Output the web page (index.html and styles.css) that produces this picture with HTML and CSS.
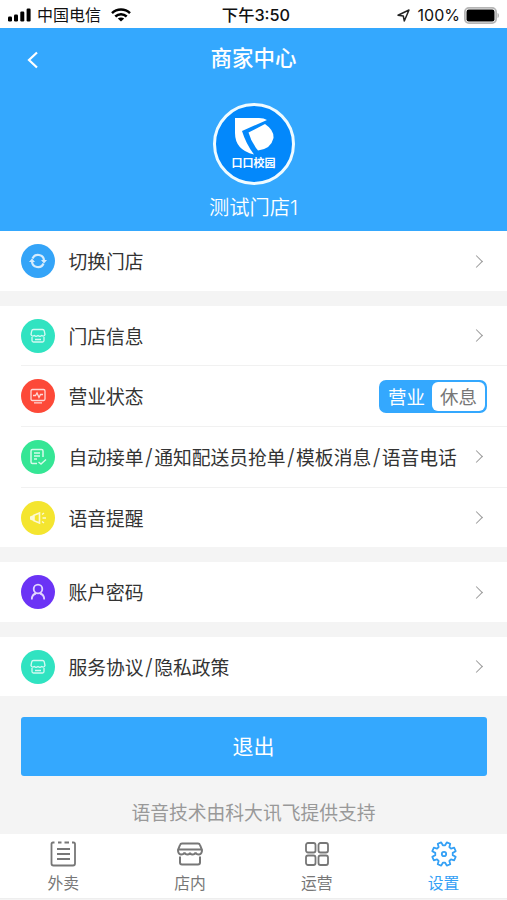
FILE: index.html
```html
<!DOCTYPE html>
<html lang="zh-CN">
<head>
    <meta charset="utf-8">
    <title>商家中心</title>
    <link rel="stylesheet" href="styles.css">
</head>
<body>
    <div class="status">
        <div class="status-left">
            <svg class="signal" width="24" height="14" viewBox="0 0 24 14">
                <rect x="0" y="8.5" width="4" height="5" rx="1.2"/>
                <rect x="6" y="6.5" width="4" height="7" rx="1.2"/>
                <rect x="12.3" y="3.5" width="4" height="10" rx="1.2"/>
                <rect x="18.6" y="0.5" width="4" height="13" rx="1.2"/>
            </svg>
            <span class="carrier">中国电信</span>
            <svg class="wifi" width="20" height="14" viewBox="0 0 20 14">
                <path d="M1 5.2C6 .4 14 .4 19 5.2M4.3 8.5C7.6 5.4 12.4 5.4 15.7 8.5" fill="none" stroke="#000" stroke-width="2.5"/>
                <path d="M10 13.6L6.8 10.6C8.6 9 11.4 9 13.2 10.6Z"/>
            </svg>
        </div>
        <div class="time">下午3:50</div>
        <div class="status-right">
            <svg width="13" height="13" viewBox="0 0 13 13">
                <path d="M1 6.2L12 1L7.3 12L6.3 7Z" fill="none" stroke="#222" stroke-width="1.5" stroke-linejoin="round"/>
            </svg>
            <span class="percent">100%</span>
            <svg width="36" height="17" viewBox="0 0 36 17">
                <rect x=".9" y=".9" width="31.2" height="15.2" rx="4" fill="#fff" stroke="#b5b5b5" stroke-width="1.8"/>
                <rect x="2.5" y="2.5" width="28" height="12" rx="2.2"/>
                <path d="M33.5 6C35.5 6.5 35.5 10.5 33.5 11Z" fill="#b5b5b5"/>
            </svg>
        </div>
    </div>

    <div class="header">
        <div class="nav">
            <svg class="back" width="12" height="18" viewBox="0 0 12 18">
                <path d="M10 1.5L2 9L10 16.5" fill="none" stroke="#fff" stroke-width="2.2"/>
            </svg>
            <h1 class="title">商家中心</h1>
        </div>
        <div class="logo">
            <svg width="44" height="38" viewBox="0 0 44 38">
                <path d="M3 0H27Q32 0 35 2L10 13Q14 26 22 36.500Q3 32 3 15Z" fill="#fff"/>
                <path d="M16.500 14.500L33 6Q42 12 41.500 20Q39 31 26 32.500Q19 24 16.500 14.500Z" fill="#fff"/>
            </svg>
            <span class="logo-text">口口校园</span>
        </div>
        <div class="shop">测试门店1</div>
    </div>

    <div class="group">
        <div class="row">
            <span class="icon blue">
                <svg width="18" height="18" viewBox="0 0 18 18">
                    <path d="M3.500 6.500A6 6 0 0 1 15 8.500M14.500 11.500A6 6 0 0 1 3 9.500" stroke-width="2.200"/>
                    <path d="M12 8H18L15 11.500ZM0 10H6L3 6.500Z" fill="#fff" stroke="none"/>
                </svg>
            </span>
            <span class="label">切换门店</span>
            <i class="arrow"></i>
        </div>
    </div>

    <div class="group">
        <div class="row">
            <span class="icon teal">
                <svg width="18" height="18" viewBox="0 0 18 18">
                    <path d="M4.500 2.500H13.500Q15 2.500 15.300 4L16 7.500Q15 10 12.700 8.500Q11 10 9 8.500Q7 10 5.300 8.500Q3 10 2 7.500L2.700 4Q3 2.500 4.500 2.500ZM3 10V13.500Q3 15 4.500 15H13.500Q15 15 15 13.500V10M6 12.500H12"/>
                </svg>
            </span>
            <span class="label">门店信息</span>
            <i class="arrow"></i>
        </div>
        <div class="row">
            <span class="icon red">
                <svg width="18" height="18" viewBox="0 0 18 18">
                    <path d="M3.500 2.500H14.500Q16 2.500 16 4V12Q16 13.500 14.500 13.500H3.500Q2 13.500 2 12V4Q2 2.500 3.500 2.500ZM4 8.500H6.500L8 6L10 10.500L11.500 7.500H14M5 15.800H13"/>
                </svg>
            </span>
            <span class="label">营业状态</span>
            <div class="switch">
                <span class="on">营业</span>
                <span class="off">休息</span>
            </div>
        </div>
        <div class="row">
            <span class="icon green">
                <svg width="18" height="18" viewBox="0 0 18 18">
                    <path d="M14 9V3Q14 1.500 12.500 1.500H3.500Q2 1.500 2 3V14Q2 15.500 3.500 15.500H8M5 5H11M5 8H11M5 11H8M9.500 14L12 16L17 11.500" stroke-width="1.500"/>
                </svg>
            </span>
            <span class="label">自动接单<b class="slash">/</b>通知配送员抢单<b class="slash">/</b>模板消息<b class="slash">/</b>语音电话</span>
            <i class="arrow"></i>
        </div>
        <div class="row">
            <span class="icon yellow">
                <svg width="18" height="18" viewBox="0 0 18 18">
                    <path d="M5 6.300L10.500 4V14L5 11.700Z" stroke-width="1.600"/>
                    <path d="M1 7.500L5 5.800V12.200L1 10.500Z" fill="#fff" stroke="none"/>
                    <path d="M13 5.500L15 4M13.500 9H17M13 12.500L15 14" stroke-width="1.500"/>
                </svg>
            </span>
            <span class="label">语音提醒</span>
            <i class="arrow"></i>
        </div>
    </div>

    <div class="group">
        <div class="row">
            <span class="icon purple">
                <svg width="18" height="18" viewBox="0 0 18 18">
                    <circle cx="9" cy="6" r="4.300" stroke-width="1.800"/>
                    <path d="M2.800 16.500Q2.800 11.500 7 10.500M11 10.500Q15.200 11.500 15.200 16.500" stroke-width="1.800"/>
                </svg>
            </span>
            <span class="label">账户密码</span>
            <i class="arrow"></i>
        </div>
    </div>

    <div class="group">
        <div class="row">
            <span class="icon teal">
                <svg width="18" height="18" viewBox="0 0 18 18">
                    <path d="M4.500 2.500H13.500Q15 2.500 15.300 4L16 7.500Q15 10 12.700 8.500Q11 10 9 8.500Q7 10 5.300 8.500Q3 10 2 7.500L2.700 4Q3 2.500 4.500 2.500ZM3 10V13.500Q3 15 4.500 15H13.500Q15 15 15 13.500V10M6 12.500H12"/>
                </svg>
            </span>
            <span class="label">服务协议<b class="slash">/</b>隐私政策</span>
            <i class="arrow"></i>
        </div>
    </div>

    <button class="logout" type="button">退出</button>
    <div class="support">语音技术由科大讯飞提供支持</div>

    <div class="tabbar">
        <div class="tab">
            <svg width="28" height="28" viewBox="0 0 28 28">
                <path d="M5.500 2.500H4Q2.500 2.500 2.500 4V23.500Q2.500 25.500 4.500 25.500H24Q26 25.500 26 23.500V4Q26 2.500 24.500 2.500H23M9 2.500H12.500M15.500 2.500H20M8 9H21M8 14H21M8 19H21"/>
            </svg>
            <span>外卖</span>
        </div>
        <div class="tab">
            <svg width="28" height="28" viewBox="0 0 28 28">
                <path d="M6 3.500H22Q23.500 3.500 24 5L26 10Q26 14 23 14.500Q20 14.500 19.500 12.500Q19 14.500 16.500 14.500Q14 14.500 14 12.500Q14 14.500 11.500 14.500Q9 14.500 8.500 12.500Q8 14.500 5 14.500Q2 14 2 10L4 5Q4.500 3.500 6 3.500ZM3 9.500H25M4 16.500V22.500Q4 24.500 6 24.500H22Q24 24.500 24 22.500V16.500" stroke-width="2"/>
            </svg>
            <span>店内</span>
        </div>
        <div class="tab">
            <svg width="28" height="28" viewBox="0 0 28 28">
                <rect x="3" y="3" width="9.500" height="9.500" rx="2"/>
                <rect x="15.500" y="3" width="9.500" height="9.500" rx="2"/>
                <rect x="3" y="15.500" width="9.500" height="9.500" rx="2"/>
                <rect x="15.500" y="15.500" width="9.500" height="9.500" rx="2"/>
            </svg>
            <span>运营</span>
        </div>
        <div class="tab active">
            <svg width="28" height="28" viewBox="0 0 28 28">
                <path id="gear" d=""/>
                <circle cx="14" cy="14" r="2.200"/>
            </svg>
            <span>设置</span>
        </div>
    </div>
    <script src="gear.js"></script>
</body>
</html>
```

FILE: styles.css
```css
* {
    box-sizing: border-box;
}

body {
    margin: 0;
    height: 900px;
    overflow: hidden;
    background: #f4f4f4;
    color: #333;
    font-family: Inter, "Noto Sans CJK SC", sans-serif;
}

svg {
    display: block;
    flex: none;
}

/* 状态栏 */
.status {
    display: grid;
    grid-template-columns: 1fr auto 1fr;
    align-items: center;
    height: 28px;
    padding: 2px 7px 0 8px;
    background: #fff;
    color: #111;
    font-size: 16px;
    line-height: 26px;
}

.status-left,
.status-right {
    display: flex;
    align-items: center;
}

.status-right {
    justify-content: flex-end;
}

.carrier {
    margin: 0 10px 0 5px;
}

.time {
    padding-left: 4px;
    font-size: 16.3px;
    font-weight: 500;
}

.percent {
    margin: 0 4px 0 8px;
}

/* 头部 */
.header {
    display: flex;
    flex-direction: column;
    align-items: center;
    height: 203.4px;
    background: #34a8fe;
    color: #fff;
}

.nav {
    display: grid;
    grid-template-columns: 1fr auto 1fr;
    align-items: center;
    width: 100%;
    height: 64px;
}

.back {
    margin-left: 27px;
}

.title {
    margin: 0;
    padding-bottom: 4px;
    font-size: 21.5px;
    font-weight: 500;
    line-height: 60px;
}

.logo {
    display: flex;
    flex-direction: column;
    align-items: center;
    width: 82px;
    height: 82px;
    margin-top: 11px;
    padding-top: 12px;
    border: 3px solid #f0fbff;
    border-radius: 50%;
    background: #0388fb;
}

.logo-text {
    margin-top: -1px;
    font-size: 11px;
    font-weight: 700;
    line-height: 16px;
}

.shop {
    margin-top: 8px;
    font-size: 20.3px;
    font-weight: 350;
    line-height: 30px;
}

/* 列表 */
.group {
    margin-bottom: 15px;
    background: #fff;
}

.row {
    display: flex;
    align-items: center;
    height: 59.5px;
    margin-left: 21px;
    padding-right: 20px;
}

.row + .row {
    height: 60.7px;
    border-top: 1px solid #f1f1f1;
}

.icon {
    display: flex;
    align-items: center;
    justify-content: center;
    width: 34px;
    height: 34px;
    border-radius: 50%;
}

.icon svg {
    fill: none;
    stroke: #fff;
    stroke-width: 1.3;
    opacity: 0.8;
}

.blue {
    background: #34a4f8;
}

.teal {
    background: #30e3c1;
}

.red {
    background: #fd4938;
}

.green {
    background: #35e695;
}

.yellow {
    background: #f4e52f;
}

.purple {
    background: #6b33f5;
}

.label {
    flex: 1;
    margin-left: 13.5px;
    padding-top: 4px;
    font-size: 18.8px;
    line-height: 28px;
    white-space: nowrap;
}

.slash {
    display: inline-block;
    width: 10.5px;
    font-size: 22px;
    font-weight: 300;
    line-height: 20px;
    text-align: center;
}

.arrow {
    width: 9px;
    height: 9px;
    margin-right: 6px;
    border-top: 1.5px solid #999;
    border-right: 1.5px solid #999;
    transform: rotate(45deg);
}

.switch {
    display: flex;
    width: 108px;
    height: 33px;
    border: 2px solid #34a8fe;
    border-radius: 7px;
    background: #34a8fe;
    font-size: 18.5px;
    line-height: 30px;
    text-align: center;
}

.on {
    flex: 1;
    color: #fff;
}

.off {
    width: 53px;
    border-radius: 6px;
    background: #fff;
    color: #777;
}

.logout {
    display: block;
    width: 466px;
    height: 59.5px;
    margin: 20.5px auto 0;
    padding: 0 0 3px;
    border: 0;
    border-radius: 3px;
    background: #34a8fe;
    color: #fff;
    font-family: inherit;
    font-size: 21px;
}

.support {
    height: 58px;
    padding-top: 9px;
    color: #999;
    font-size: 18.8px;
    line-height: 57px;
    text-align: center;
}

/* 底部导航 */
.tabbar {
    display: grid;
    grid-template-columns: repeat(4, 1fr);
    height: 65px;
    border-bottom: 1px solid #eee;
    background: #fff;
}

.tab {
    display: flex;
    flex-direction: column;
    align-items: center;
    padding-top: 6px;
    color: #777;
    font-size: 15.8px;
    line-height: 24px;
}

.tab svg {
    margin-bottom: 4px;
    fill: none;
    stroke: currentColor;
    stroke-width: 1.8;
}

.active {
    color: #34a0f5;
}
```

FILE: gear.js
```js
// 八齿齿轮
var d = "";
for (var i = 0; i < 8; i++) {
    [[-15, 8.8], [-9, 12], [9, 12], [15, 8.8]].forEach(function (p) {
        var a = (i * 45 + 22.5 + p[0]) * Math.PI / 180;
        d += (d ? "L" : "M") + (14 + p[1] * Math.cos(a)).toFixed(2) + " " + (14 + p[1] * Math.sin(a)).toFixed(2);
    });
}
document.getElementById("gear").setAttribute("d", d + "Z");
document.getElementById("gear").setAttribute("stroke-linejoin", "round");
```
